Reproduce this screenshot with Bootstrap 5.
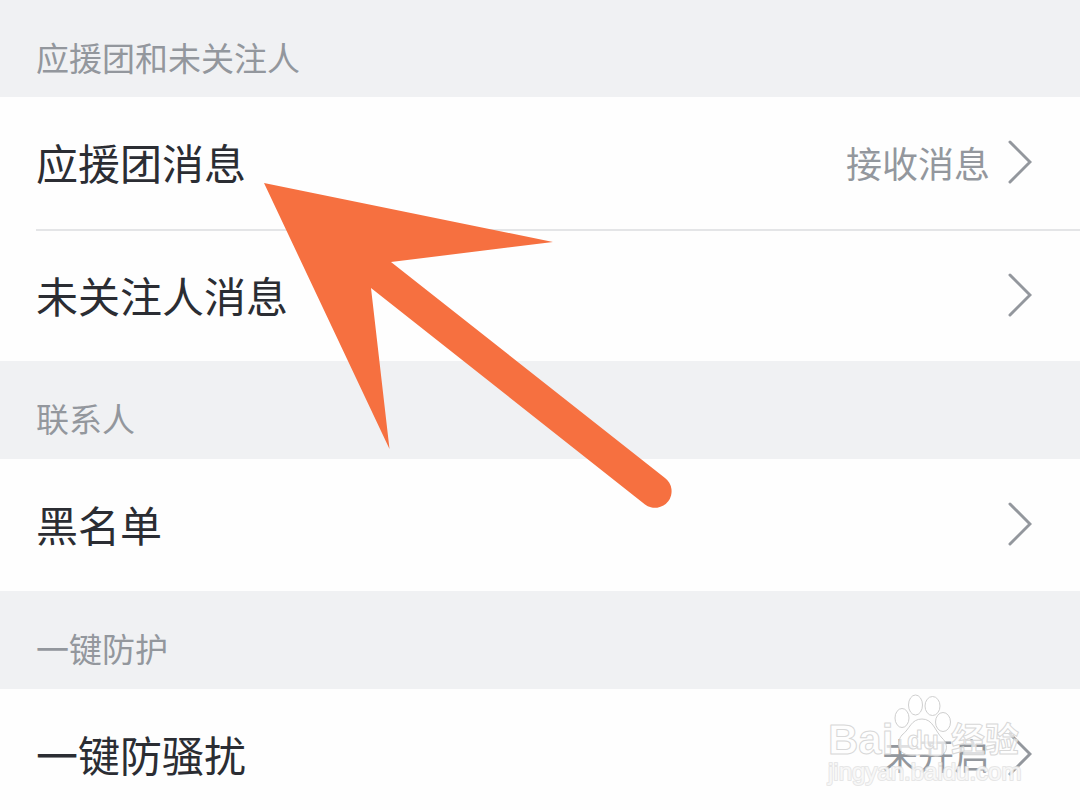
<!DOCTYPE html>
<html lang="zh-CN">
<head>
<meta charset="utf-8">
<meta name="viewport" content="width=device-width, initial-scale=1">
<title>消息设置</title>
<link href="https://cdn.jsdelivr.net/npm/bootstrap@5.3.0/dist/css/bootstrap.min.css" rel="stylesheet">
<style>
  body { font-family: "Noto Sans CJK SC", sans-serif; color: #2b2d33; background: #fefefe; }
  .group-title { height: 98px; padding: 33px 36px 0; background: #f0f1f3; color: #93979d; font-size: 33px; line-height: 48px; font-weight: 400; }
  .group-title.first { height: 97px; }
  .setting { height: 132px; color: inherit; font-size: 42px; line-height: 60px; padding: 0 48px 2px 36px; }
  .setting .value { color: #93979d; font-size: 36px; margin-right: 18px; }
  .divided { height: 2px; margin-left: 36px; background: #e4e5e7; }
  .setting.short { height: 130px; }
  .pointer { left: 264px; top: 182px; pointer-events: none; }
  .watermark { right: 54px; bottom: 20px; pointer-events: none; }
</style>
</head>
<body>
<main class="position-relative vh-100 overflow-hidden">
  <section>
    <h2 class="group-title first m-0">应援团和未关注人</h2>
    <a href="#" class="setting d-flex align-items-center text-decoration-none">
      <span class="label me-auto">应援团消息</span><span class="value">接收消息</span>
      <svg width="24" height="44" viewBox="0 0 24 44" fill="none" stroke="#93979d" stroke-width="3" stroke-linecap="round" aria-hidden="true"><path d="M2 2 22 22 2 42"/></svg>
    </a>
    <div class="divided"></div>
    <a href="#" class="setting short d-flex align-items-center text-decoration-none">
      <span class="label me-auto">未关注人消息</span>
      <svg width="24" height="44" viewBox="0 0 24 44" fill="none" stroke="#93979d" stroke-width="3" stroke-linecap="round" aria-hidden="true"><path d="M2 2 22 22 2 42"/></svg>
    </a>
  </section>
  <section>
    <h2 class="group-title m-0">联系人</h2>
    <a href="#" class="setting d-flex align-items-center text-decoration-none">
      <span class="label me-auto">黑名单</span>
      <svg width="24" height="44" viewBox="0 0 24 44" fill="none" stroke="#93979d" stroke-width="3" stroke-linecap="round" aria-hidden="true"><path d="M2 2 22 22 2 42"/></svg>
    </a>
  </section>
  <section>
    <h2 class="group-title m-0">一键防护</h2>
    <a href="#" class="setting d-flex align-items-center text-decoration-none">
      <span class="label me-auto">一键防骚扰</span><span class="value">未开启</span>
      <svg width="24" height="44" viewBox="0 0 24 44" fill="none" stroke="#93979d" stroke-width="3" stroke-linecap="round" aria-hidden="true"><path d="M2 2 22 22 2 42"/></svg>
    </a>
  </section>

  <svg class="pointer position-absolute" width="410" height="328" viewBox="264 182 410 328" aria-hidden="true">
    <path fill="#f67040" d="M264 183 553 242 391 262 665 478A16.500 16.500 0 0 1 645 504.500L371 288 389.500 449Z"/>
  </svg>

  <svg class="watermark position-absolute" width="200" height="100" viewBox="826 690 200 100" fill="#fff" fill-opacity=".7" stroke="#d8d8d8" stroke-width="1" stroke-linejoin="round">
    <text x="828" y="754" font-size="42" font-family="Liberation Sans, sans-serif" font-weight="700">Bai</text>
    <g stroke="#cfcfcf">
      <ellipse cx="902" cy="718" rx="7" ry="9.500"/>
      <ellipse cx="915.500" cy="705" rx="7" ry="10"/>
      <ellipse cx="932.500" cy="706" rx="7.500" ry="9.500"/>
      <ellipse cx="943" cy="722" rx="7.500" ry="9.500"/>
      <path d="M922 719C911 719 910 729 902 735 896 742 898 754 909 755 917 756 923 753 934 756 947 758 950 745 942 738 935 731 933 719 922 719Z"/>
    </g>
    <text x="907" y="749" font-size="26" font-family="Liberation Sans, sans-serif" font-weight="700">du</text>
    <text x="951" y="752" font-size="34" font-family="Noto Sans CJK SC, sans-serif" font-weight="700">经验</text>
    <text x="828" y="780" font-size="24" font-family="Liberation Sans, sans-serif" paint-order="stroke" stroke-width="2" stroke="#e0e0e0" stroke-opacity=".8">jingyan.baidu.com</text>
  </svg>
</main>
<script src="https://cdn.jsdelivr.net/npm/bootstrap@5.3.0/dist/js/bootstrap.bundle.min.js"></script>
</body>
</html>
